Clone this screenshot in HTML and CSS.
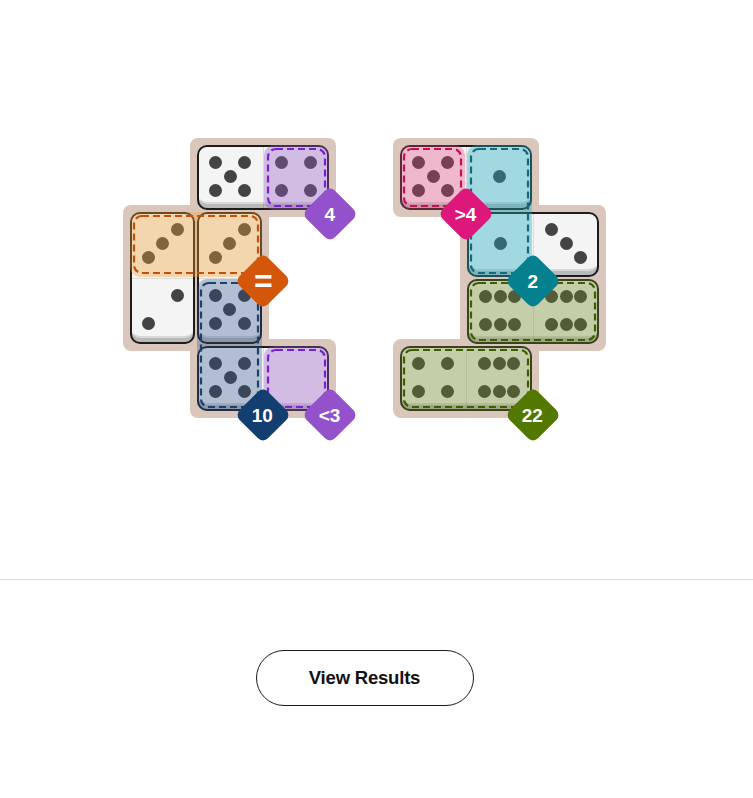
FILE: index.html
```html
<!DOCTYPE html>
<html lang="en">
<head>
<meta charset="utf-8">
<title>Pips</title>
<link rel="stylesheet" href="styles.css">
</head>
<body>
<main class="page">
  <section class="game">
    <div class="boards">
      <!-- Left board -->
      <div class="board">
        <div class="tan r0 c1"></div><div class="tan r0 c2"></div>
        <div class="tan r1 c0"></div><div class="tan r1 c1"></div>
        <div class="tan r2 c0"></div><div class="tan r2 c1"></div>
        <div class="tan r3 c1"></div><div class="tan r3 c2"></div>

        <div class="domino horiz r0 c1 h2">
          <div class="half"><i class="pip tl"></i><i class="pip tr"></i><i class="pip cc"></i><i class="pip bl"></i><i class="pip br"></i></div>
          <div class="half"><i class="pip tl"></i><i class="pip tr"></i><i class="pip bl"></i><i class="pip br"></i></div>
        </div>
        <div class="domino vert r1 c0 v2">
          <div class="half"><i class="pip tr"></i><i class="pip cc"></i><i class="pip bl"></i></div>
          <div class="half"><i class="pip tr"></i><i class="pip bl"></i></div>
        </div>
        <div class="domino vert r1 c1 v2">
          <div class="half"><i class="pip tr"></i><i class="pip cc"></i><i class="pip bl"></i></div>
          <div class="half"><i class="pip tl"></i><i class="pip tr"></i><i class="pip cc"></i><i class="pip bl"></i><i class="pip br"></i></div>
        </div>
        <div class="domino horiz r3 c1 h2">
          <div class="half"><i class="pip tl"></i><i class="pip tr"></i><i class="pip cc"></i><i class="pip bl"></i><i class="pip br"></i></div>
          <div class="half"></div>
        </div>

        <div class="region purple r0 c2"><svg class="dash"><rect width="100%" height="100%" rx="8"/></svg></div>
        <div class="region orange r1 c0 h2"><svg class="dash"><rect width="100%" height="100%" rx="8"/></svg></div>
        <div class="region navy r2 c1 v2"><svg class="dash"><rect width="100%" height="100%" rx="8"/></svg></div>
        <div class="region purple r3 c2"><svg class="dash"><rect width="100%" height="100%" rx="8"/></svg></div>

        <div class="tag purple-tag r0 c2"><span>4</span></div>
        <div class="tag orange-tag r1 c1"><span class="eq">=</span></div>
        <div class="tag navy-tag r3 c1"><span>10</span></div>
        <div class="tag purple-tag r3 c2"><span>&lt;3</span></div>
      </div>

      <!-- Right board -->
      <div class="board">
        <div class="tan r0 c0"></div><div class="tan r0 c1"></div>
        <div class="tan r1 c1"></div><div class="tan r1 c2"></div>
        <div class="tan r2 c1"></div><div class="tan r2 c2"></div>
        <div class="tan r3 c0"></div><div class="tan r3 c1"></div>

        <div class="domino horiz r0 c0 h2">
          <div class="half"><i class="pip tl"></i><i class="pip tr"></i><i class="pip cc"></i><i class="pip bl"></i><i class="pip br"></i></div>
          <div class="half"><i class="pip cc"></i></div>
        </div>
        <div class="domino horiz r1 c1 h2">
          <div class="half"><i class="pip cc"></i></div>
          <div class="half"><i class="pip tl"></i><i class="pip cc"></i><i class="pip br"></i></div>
        </div>
        <div class="domino horiz r2 c1 h2">
          <div class="half"><i class="pip tl"></i><i class="pip tc"></i><i class="pip tr"></i><i class="pip bl"></i><i class="pip bc"></i><i class="pip br"></i></div>
          <div class="half"><i class="pip tl"></i><i class="pip tc"></i><i class="pip tr"></i><i class="pip bl"></i><i class="pip bc"></i><i class="pip br"></i></div>
        </div>
        <div class="domino horiz r3 c0 h2">
          <div class="half"><i class="pip tl"></i><i class="pip tr"></i><i class="pip bl"></i><i class="pip br"></i></div>
          <div class="half"><i class="pip tl"></i><i class="pip tc"></i><i class="pip tr"></i><i class="pip bl"></i><i class="pip bc"></i><i class="pip br"></i></div>
        </div>

        <div class="region pink r0 c0"><svg class="dash"><rect width="100%" height="100%" rx="8"/></svg></div>
        <div class="region teal r0 c1 v2"><svg class="dash"><rect width="100%" height="100%" rx="8"/></svg></div>
        <div class="region green r2 c1 h2"><svg class="dash"><rect width="100%" height="100%" rx="8"/></svg></div>
        <div class="region green r3 c0 h2"><svg class="dash"><rect width="100%" height="100%" rx="8"/></svg></div>

        <div class="tag pink-tag r0 c0"><span>&gt;4</span></div>
        <div class="tag teal-tag r1 c1"><span>2</span></div>
        <div class="tag green-tag r3 c1"><span>22</span></div>
      </div>
    </div>
  </section>

  <section class="actions">
    <button class="results-btn" type="button">View Results</button>
  </section>
</main>
</body>
</html>
```

FILE: styles.css
```css
* { box-sizing: border-box; }

html, body {
  margin: 0;
  padding: 0;
  background: #ffffff;
}

body {
  font-family: "Liberation Sans", Arial, sans-serif;
  color: #121212;
}

.page {
  width: 753px;
}

.game {
  height: 580px;
  padding-top: 144px;
  border-bottom: 1px solid #dcdcdc;
}

.boards {
  display: flex;
  justify-content: center;
  gap: 69px;
  padding-right: 24px;
}

.board {
  display: grid;
  grid-template-columns: repeat(3, 67px);
  grid-template-rows: repeat(4, 67px);
}

/* grid placement helpers */
.r0 { grid-row: 1; }
.r1 { grid-row: 2; }
.r2 { grid-row: 3; }
.r3 { grid-row: 4; }
.c0 { grid-column: 1; }
.c1 { grid-column: 2; }
.c2 { grid-column: 3; }
.h2 { grid-column-end: span 2; }
.v2 { grid-row-end: span 2; }

/* tan board background */
.tan {
  margin: -6px;
  background: #dbc6bc;
  border-radius: 8px;
}

/* dominoes */
.domino {
  margin: 1px;
  display: grid;
  background: #f4f4f4;
  border-radius: 10px;
  box-shadow: inset 0 0 0 2px #1c1c1c, inset 0 -6px 0 #b9b9b9, inset 0 -8px 0 #d8d8d8;
  overflow: hidden;
}

.domino.horiz { grid-template-columns: 1fr 1fr; }
.domino.vert { grid-template-rows: 1fr 1fr; }

.domino.horiz .half + .half { box-shadow: inset 1px 0 0 rgba(0, 0, 0, 0.1); }
.domino.vert .half + .half { box-shadow: inset 0 1px 0 rgba(0, 0, 0, 0.1); }

.half {
  display: grid;
  grid-template-columns: repeat(3, 14.5px);
  grid-template-rows: repeat(3, 14px);
  place-content: center;
  padding-bottom: 3px;
}

.pip {
  width: 13px;
  height: 13px;
  border-radius: 50%;
  background: #434343;
  place-self: center;
}

.tl { grid-area: 1 / 1; }
.tc { grid-area: 1 / 2; }
.tr { grid-area: 1 / 3; }
.cc { grid-area: 2 / 2; }
.bl { grid-area: 3 / 1; }
.bc { grid-area: 3 / 2; }
.br { grid-area: 3 / 3; }

/* regions */
.region {
  position: relative;
  margin: 1px;
  border-radius: 10px;
}

.dash {
  position: absolute;
  inset: 4px;
  width: calc(100% - 8px);
  height: calc(100% - 8px);
  overflow: visible;
}

.dash rect {
  fill: none;
  stroke: var(--line);
  stroke-width: 2.2;
  stroke-dasharray: 7 4;
}

.purple { background: rgba(150, 90, 200, 0.36); --line: #7a1fd6; }
.orange { background: rgba(240, 160, 50, 0.36); --line: #c4500c; }
.navy   { background: rgba(40, 80, 140, 0.32); --line: #1d416f; }
.pink   { background: rgba(232, 60, 120, 0.32); --line: #c3124f; }
.teal   { background: rgba(30, 170, 190, 0.38); --line: #15697a; }
.green  { background: rgba(110, 140, 40, 0.36); --line: #3e5c00; }

/* constraint tags */
.tag {
  width: 40px;
  height: 40px;
  justify-self: end;
  align-self: end;
  border-radius: 7px;
  transform: translate(50%, calc(50% + 3px)) rotate(45deg);
  display: flex;
  align-items: center;
  justify-content: center;
  color: #ffffff;
  z-index: 2;
}

.tag span {
  transform: rotate(-45deg);
  font-family: "Liberation Sans", Arial, sans-serif;
  font-weight: 700;
  font-size: 19px;
  line-height: 1;
}

.tag .eq {
  font-size: 32px;
}

.purple-tag { background: #9351cb; }
.orange-tag { background: #d4560b; }
.navy-tag   { background: #123e70; }
.pink-tag   { background: #dd177b; }
.teal-tag   { background: #05808f; }
.green-tag  { background: #527800; }

/* button */
.actions {
  display: flex;
  justify-content: center;
  padding-top: 70px;
  padding-right: 24px;
}

.results-btn {
  width: 218px;
  height: 56px;
  border: 1px solid #1a1a1a;
  border-radius: 28px;
  background: #ffffff;
  color: #121212;
  font-family: "Liberation Sans", Arial, sans-serif;
  font-weight: 700;
  font-size: 18.5px;
  letter-spacing: -0.2px;
  cursor: pointer;
}
```
